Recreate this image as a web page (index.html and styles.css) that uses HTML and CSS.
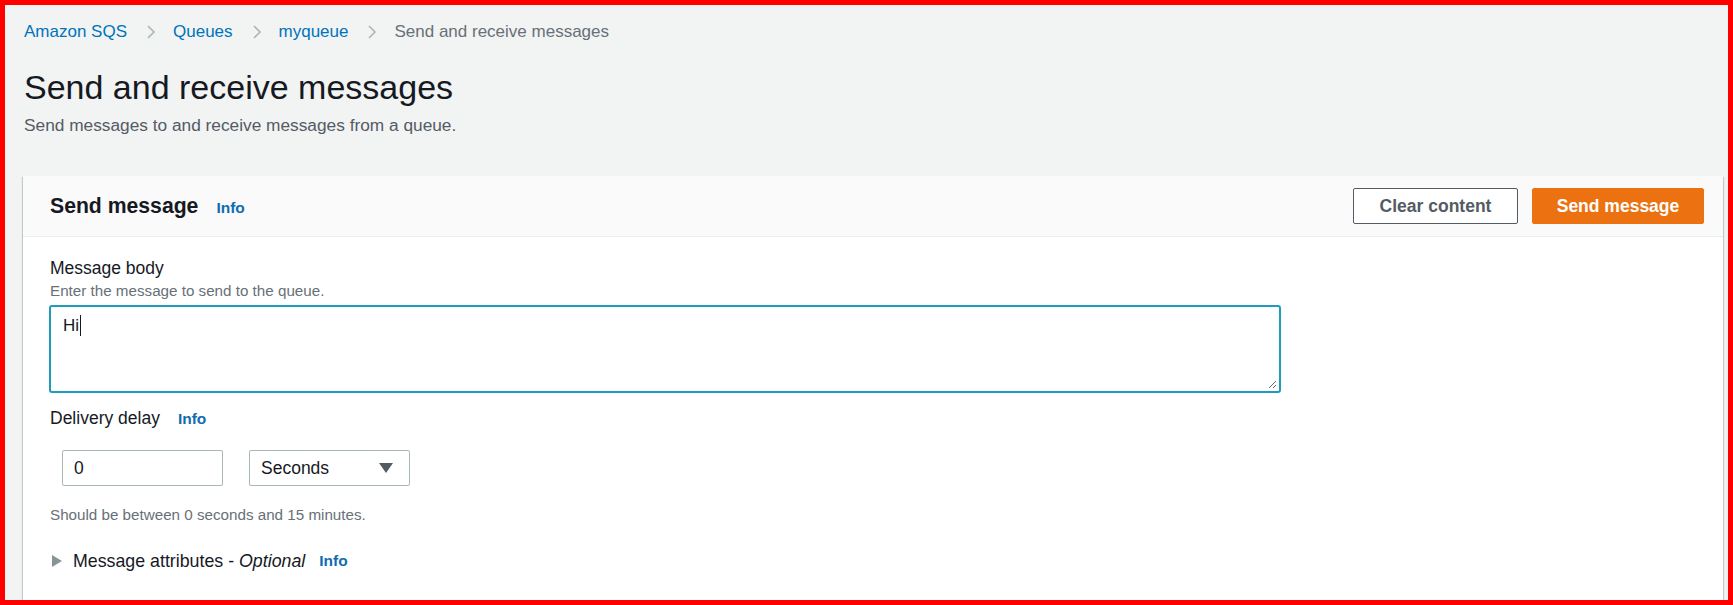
FILE: index.html
```html
<!DOCTYPE html>
<html>
<head>
<meta charset="utf-8">
<link rel="stylesheet" href="styles.css">
</head>
<body>
<div class="frame">
  <nav class="crumbs">
    <a class="crumb-link">Amazon SQS</a>
    <svg class="chev" viewBox="0 0 10 16" width="10" height="16"><path d="M2 2 L8 8 L2 14" fill="none" stroke="#aab7b8" stroke-width="1.6"/></svg>
    <a class="crumb-link">Queues</a>
    <svg class="chev" viewBox="0 0 10 16" width="10" height="16"><path d="M2 2 L8 8 L2 14" fill="none" stroke="#aab7b8" stroke-width="1.6"/></svg>
    <a class="crumb-link">myqueue</a>
    <svg class="chev" viewBox="0 0 10 16" width="10" height="16"><path d="M2 2 L8 8 L2 14" fill="none" stroke="#aab7b8" stroke-width="1.6"/></svg>
    <span class="crumb-current">Send and receive messages</span>
  </nav>
  <h1 class="title">Send and receive messages</h1>
  <p class="subtitle">Send messages to and receive messages from a queue.</p>

  <section class="panel">
    <header class="panel-head">
      <div class="head-left">
        <h2 class="panel-title">Send message</h2>
        <a class="info">Info</a>
      </div>
      <div class="actions">
        <button class="btn btn-normal">Clear content</button>
        <button class="btn btn-primary">Send message</button>
      </div>
    </header>
    <div class="panel-body">
      <div class="field">
        <div class="label">Message body</div>
        <div class="desc">Enter the message to send to the queue.</div>
        <div class="textarea">
          <span class="ta-text">Hi</span><span class="caret"></span>
          <svg class="grip" viewBox="0 0 10 10" width="10" height="10"><path d="M9 2 L2 9 M9 6 L6 9" stroke="#6b6b6b" stroke-width="1"/></svg>
        </div>
      </div>
      <div class="field delay">
        <div class="label-row"><span class="label">Delivery delay</span><a class="info">Info</a></div>
        <div class="inputs">
          <div class="input">0</div>
          <div class="select"><span>Seconds</span><svg viewBox="0 0 14 10" width="14" height="10"><path d="M0 0 L14 0 L7 10 Z" fill="#545b64"/></svg></div>
        </div>
        <div class="hint">Should be between 0 seconds and 15 minutes.</div>
      </div>
      <div class="expander">
        <svg viewBox="0 0 10 12" width="10" height="12"><path d="M0 0 L10 6 L0 12 Z" fill="#879596"/></svg>
        <span class="exp-text">Message attributes - <em>Optional</em></span>
        <a class="info">Info</a>
      </div>
    </div>
  </section>
</div>
</body>
</html>
```

FILE: styles.css
```css
* { box-sizing: border-box; }
html, body { margin: 0; padding: 0; }
body {
  font-family: "Liberation Sans", Arial, sans-serif;
  color: #16191f;
}
.frame {
  width: 1733px;
  height: 605px;
  border: 5px solid #ff0000;
  background: #f2f3f3;
  padding: 17px 5px 0 19px;
  overflow: hidden;
}
.crumbs {
  display: flex;
  align-items: center;
  height: 20px;
  font-size: 17px;
}
.crumb-link { color: #0073bb; }
.crumb-current { color: #687078; }
.chev { margin: 0 17px 0 19px; }
.title {
  margin: 25px 0 0;
  font-size: 34px;
  line-height: 40px;
  font-weight: 400;
  color: #16191f;
}
.subtitle {
  margin: 7px 0 0;
  font-size: 17.3px;
  line-height: 22px;
  color: #545b64;
}
.panel {
  margin-top: 40px;
  margin-left: -1px;
  background: #fff;
  box-shadow: 0 1px 1px 0 rgba(0,28,36,.3), 1px 1px 1px 0 rgba(0,28,36,.15), -1px 1px 1px 0 rgba(0,28,36,.15);
  height: 500px;
}
.panel-head {
  display: flex;
  align-items: center;
  justify-content: space-between;
  height: 61px;
  padding: 0 19px 0 27px;
  background: #fafafa;
  border-bottom: 1px solid #eaeded;
}
.head-left { display: flex; align-items: baseline; }
.panel-title {
  margin: 0;
  font-size: 21.2px;
  font-weight: 700;
  color: #16191f;
}
.info {
  color: #0f6cb0;
  font-weight: 700;
  font-size: 15.5px;
  margin-left: 18px;
}
.actions { display: flex; gap: 14px; }
.btn {
  font-family: "Liberation Sans", Arial, sans-serif;
  font-weight: 700;
  font-size: 17.5px;
  height: 36px;
  border-radius: 2px;
  padding: 0;
}
.btn-normal {
  width: 165px;
  background: #fff;
  color: #545b64;
  border: 1px solid #545b64;
}
.btn-primary {
  width: 172px;
  background: #ec7211;
  color: #fff;
  border: 1px solid #ec7211;
}
.panel-body { padding: 20px 26px 0 27px; }
.label { font-size: 17.5px; line-height: 22px; color: #16191f; }
.desc { font-size: 15.2px; line-height: 19px; color: #687078; margin-top: 2px; }
.textarea {
  position: relative;
  margin-top: 5px;
  margin-left: -1px;
  width: 1232px;
  height: 88px;
  border: 2px solid #1e9cc0;
  border-radius: 3px;
  padding: 8px 12px;
  font-size: 17px;
  line-height: 22px;
  display: flex;
  align-items: flex-start;
}
.caret {
  display: inline-block;
  width: 1px;
  height: 21px;
  background: #16191f;
  margin-left: 1px;
}
.grip { position: absolute; right: 2px; bottom: 2px; }
.delay { margin-top: 14px; }
.label-row { display: flex; align-items: baseline; }
.inputs {
  display: flex;
  gap: 26px;
  margin: 21px 0 0 12px;
}
.input, .select {
  width: 161px;
  height: 36px;
  border: 1px solid #aab7b8;
  border-radius: 2px;
  font-size: 17.5px;
  display: flex;
  align-items: center;
  padding: 0 11px;
}
.select { justify-content: space-between; padding-right: 16px; }
.hint {
  margin-top: 19px;
  font-size: 15.2px;
  line-height: 19px;
  color: #687078;
}
.expander {
  display: flex;
  align-items: center;
  margin-top: 26px;
  height: 22px;
  padding-left: 2px;
}
.exp-text { font-size: 17.8px; margin-left: 11px; color: #16191f; }
.expander .info { margin-left: 14px; }
```
